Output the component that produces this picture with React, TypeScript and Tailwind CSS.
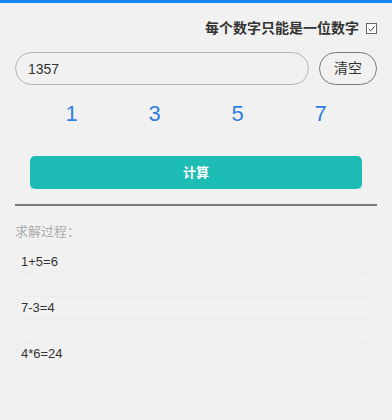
import { useState } from 'react';

const steps = ['1+5=6', '7-3=4', '4*6=24'];

export default function App() {
  const [value, setValue] = useState('1357');
  const [single, setSingle] = useState(true);
  const digits = value.split('').slice(0, 4);

  return (
    <div
      className="w-[392px] h-[420px] bg-[#f1f1f1] border-t-[3px] border-[#1585f3] overflow-hidden"
      style={{ fontFamily: '"Liberation Sans", "Noto Sans CJK SC", sans-serif' }}
    >
      <div className="px-[15px]">
        {/* ── 选项 ─────────────────────────────── */}
        <label className="flex items-center justify-end gap-[7px] h-[25px] mt-[13px] cursor-pointer">
          <span className="text-[14px] font-bold text-[#333]">每个数字只能是一位数字</span>
          <span
            onClick={() => setSingle(!single)}
            className="w-[11px] h-[11px] border border-[#666] bg-white flex items-center justify-center"
          >
            {single && (
              <svg width="9" height="9" viewBox="0 0 9 9" fill="none">
                <path d="M1.5 4.6 L3.7 6.8 L7.6 2.2" stroke="#444" strokeWidth="1" />
              </svg>
            )}
          </span>
        </label>

        {/* ── 输入 ─────────────────────────────── */}
        <div className="flex items-center gap-[10px] mt-[11px]">
          <input
            className="flex-1 h-[33px] px-[12px] rounded-full border border-[#b3b3b3] bg-transparent text-[14px] text-[#333] outline-none"
            value={value}
            onChange={e => setValue(e.target.value)}
          />
          <button
            onClick={() => setValue('')}
            className="w-[58px] h-[33px] rounded-full border border-[#777] text-[14px] text-[#333]"
          >
            清空
          </button>
        </div>

        {/* ── 数字 ─────────────────────────────── */}
        <div className="grid grid-cols-4 mx-[15px] mt-[12px] h-[32px] items-center">
          {digits.map((d, i) => (
            <div key={i} className="text-center text-[22px] text-[#2f7fe3]">
              {d}
            </div>
          ))}
        </div>

        <button className="block w-[332px] h-[33px] mx-auto mt-[27px] rounded-[5px] bg-[#1dbcb4] text-white text-[13px] font-bold">
          计算
        </button>

        <div className="h-[2px] bg-[#7a7a7a] mt-[15px]" />

        {/* ── 求解过程 ─────────────────────────── */}
        <div className="text-[13px] text-[#ababab] mt-[17px] leading-[18px]">求解过程：</div>
        <div className="flex flex-col gap-[22px] mt-[9px]">
          {steps.map(s => (
            <div
              key={s}
              className="h-[24px] flex items-center px-[5px] rounded-full border border-[#ebebeb] text-[13px] text-[#333]"
            >
              {s}
            </div>
          ))}
        </div>
      </div>
    </div>
  );
}
